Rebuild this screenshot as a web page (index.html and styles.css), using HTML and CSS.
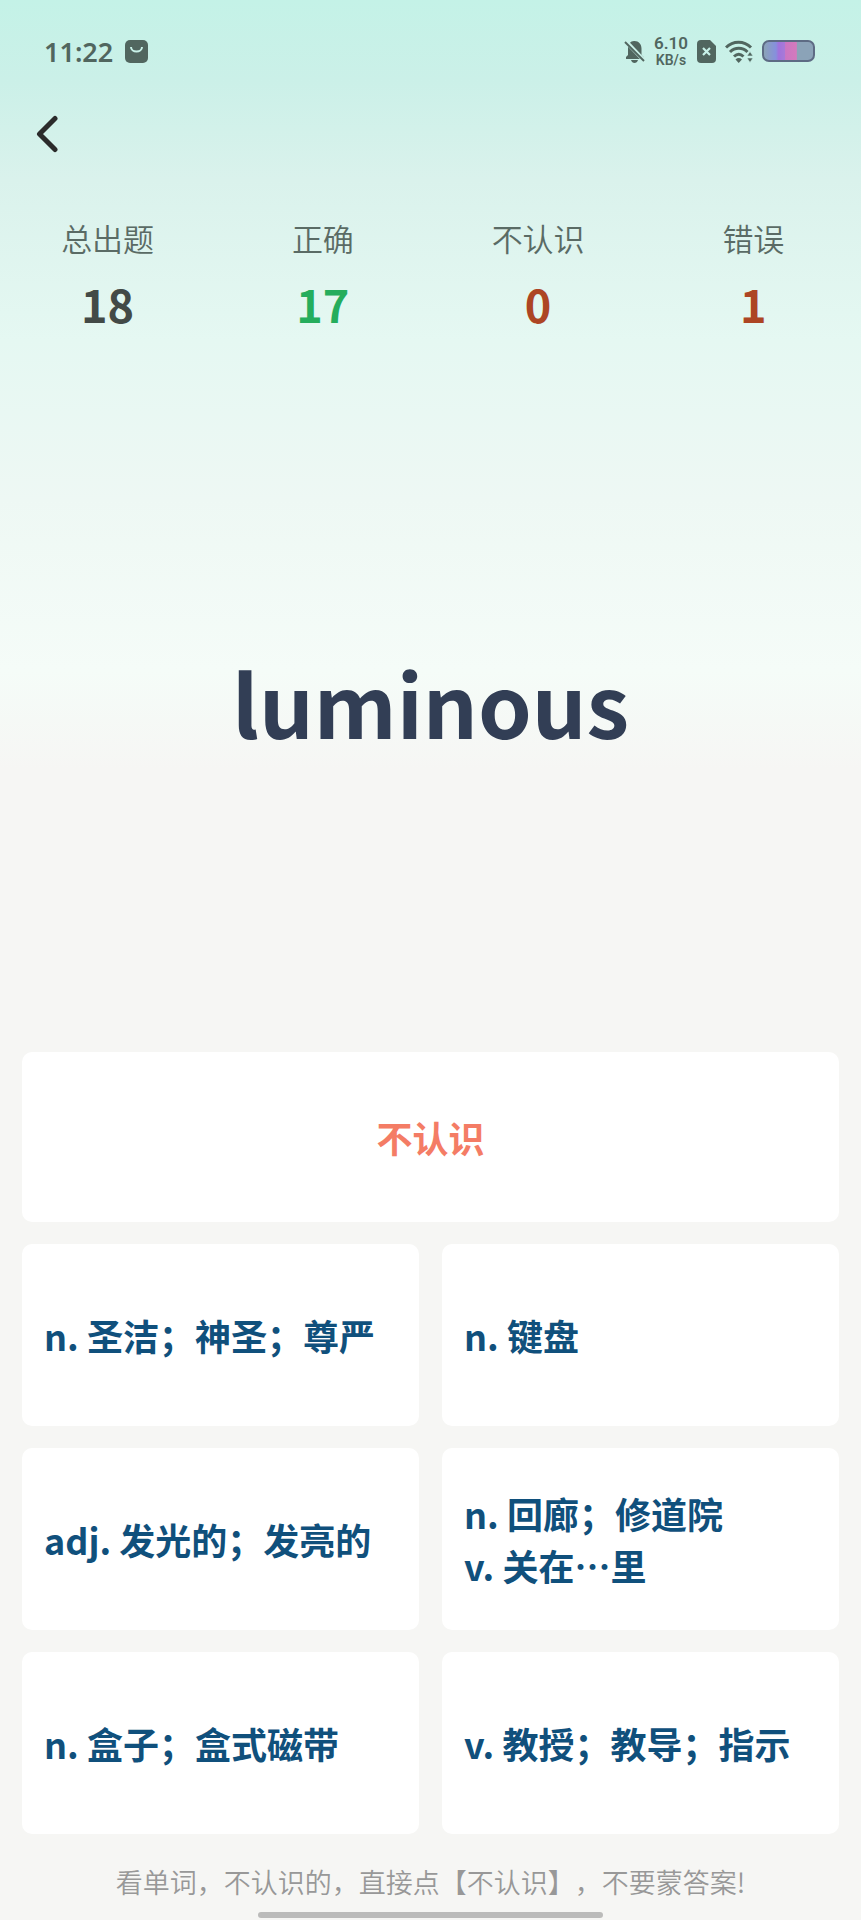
FILE: index.html
```html
<!DOCTYPE html>
<html lang="zh-CN">
  <head>
    <meta charset="UTF-8" />
    <meta name="viewport" content="width=device-width, initial-scale=1.0" />
    <title>看词选义</title>
    <link rel="stylesheet" href="styles.css">
  </head>
  <body>
    <div class="status">
      <span class="time">11:22</span>
      <svg class="bag" width="23" height="23" viewBox="0 0 23 23">
        <rect width="23" height="23" rx="5" fill="#51665f"/>
        <path d="M6 7a5.500 4.500 0 0 0 11 0" fill="none" stroke="#c8f1e8" stroke-width="2"/>
      </svg>
      <div class="status-right">
        <svg width="21" height="24" viewBox="0 0 21 24">
          <path d="M2 20v-2l2-2V9.500C4 5 6.500 2.200 10 2c4.500-.3 7.500 3 7.500 7.500V16l2 2v2zM7 21h7c-.5 2-2 3-3.500 3S7.500 23 7 21z" fill="#51665f"/>
          <path d="M1.500 2l20 21" stroke="#caf1e8" stroke-width="4"/>
          <path d="M1 3l19 19" stroke="#51665f" stroke-width="2"/>
        </svg>
        <div class="speed"><span>6.10</span><span class="unit">KB/s</span></div>
        <svg width="19" height="23" viewBox="0 0 19 23">
          <path d="M4 0h9l6 6v13a4 4 0 0 1-4 4H4a4 4 0 0 1-4-4V4a4 4 0 0 1 4-4z" fill="#51665f"/>
          <path d="M6 8l7 7M13 8l-7 7" stroke="#c8f1e8" stroke-width="2.200"/>
        </svg>
        <svg class="wifi" width="28" height="23" viewBox="0 0 28 23">
          <g fill="none" stroke="#51665f" stroke-width="3">
            <path d="M1 7.500c7-7 18-7 25 0"/>
            <path d="M5 12c5-5 12.500-5 17.500 0"/>
            <path d="M9 16.500c3-2.800 6.500-2.800 9.500 0"/>
          </g>
          <path d="M10.500 19.500a5 5 0 0 1 6.500 0L13.700 23z" fill="#51665f"/>
          <path d="M22 16l3-4.500 3 4.500zM22 18h6l-3 4.500z" fill="#51665f" stroke="#c8f1e8" stroke-width=".6"/>
        </svg>
        <div class="battery"></div>
      </div>
    </div>

    <header class="nav">
      <button class="back" aria-label="返回">
        <svg width="22" height="38" viewBox="0 0 22 38">
          <path d="M19 3.500L3.500 19 19 34.500" fill="none" stroke="#2b2b2b" stroke-width="5" stroke-linecap="round" stroke-linejoin="round"/>
        </svg>
      </button>
    </header>

    <div class="stats">
      <div class="stat"><span class="label">总出题</span><span class="num">18</span></div>
      <div class="stat"><span class="label">正确</span><span class="num ok">17</span></div>
      <div class="stat"><span class="label">不认识</span><span class="num err">0</span></div>
      <div class="stat"><span class="label">错误</span><span class="num err">1</span></div>
    </div>

    <main class="word">
      <h1>luminous</h1>
    </main>

    <div class="options">
      <button class="option unknown">不认识</button>
      <button class="option">n. 圣洁；神圣；尊严</button>
      <button class="option">n. 键盘</button>
      <button class="option">adj. 发光的；发亮的</button>
      <button class="option">n. 回廊；修道院<br>v. 关在…里</button>
      <button class="option">n. 盒子；盒式磁带</button>
      <button class="option">v. 教授；教导；指示</button>
    </div>

    <p class="hint">看单词，不认识的，直接点【不认识】，不要蒙答案!</p>
    <div class="home-bar"></div>
  </body>
</html>
```

FILE: styles.css
```css
* {
  margin: 0;
  padding: 0;
  box-sizing: border-box;
}
body {
  min-height: 100vh;
  display: flex;
  flex-direction: column;
  font-family: 'Noto Sans CJK SC', sans-serif;
  text-spacing-trim: space-all;
  background: #f6f6f4 linear-gradient(#c4f2e7 0, #cbf0e8 80px, #daf2ec 180px, #e5f8f2 340px, #eef8f4 500px, #f5fcf8 670px, #f6f6f4 770px) no-repeat;
}
.status {
  height: 102px;
  padding: 0 46px 0 44px;
  display: flex;
  align-items: center;
  font-family: 'Noto Sans', sans-serif;
  font-weight: 600;
  color: #51665f;
}
.time {
  font-size: 27px;
}
.bag {
  margin-left: 12px;
}
.status-right {
  margin-left: auto;
  display: flex;
  align-items: center;
  gap: 9px;
}
.speed {
  display: flex;
  flex-direction: column;
  align-items: center;
  font-family: Roboto, sans-serif;
  font-size: 17px;
  line-height: 18px;
}
.unit {
  font-size: 14px;
  line-height: 16px;
}
.battery {
  width: 53px;
  height: 22px;
  border: 2px solid #5d6b84;
  border-radius: 7px;
  background: linear-gradient(90deg, #8ba3b8 0, #8690dc 24%, #a172dc 30%, #a77ad8 42%, #cb76c2 44%, #d47abd 66%, #8ba3b8 68%);
}
.nav {
  height: 64px;
  padding-left: 36px;
  display: flex;
  align-items: center;
}
.back {
  display: flex;
  border: none;
  background: none;
  cursor: pointer;
}
.stats {
  padding-top: 49px;
  display: flex;
}
.stat {
  flex: 1;
  display: flex;
  flex-direction: column;
  align-items: center;
}
.label {
  font-size: 31px;
  line-height: 46px;
  font-weight: 350;
  color: #5a6b65;
}
.num {
  margin-top: 12px;
  font-size: 45px;
  line-height: 62px;
  font-weight: 700;
  color: #434a47;
}
.ok {
  color: #25ad5c;
}
.err {
  color: #ad4524;
}
.word {
  flex: 1;
  padding-top: 16px;
  display: flex;
  align-items: center;
  justify-content: center;
}
.word h1 {
  font-size: 86px;
  line-height: 140px;
  font-weight: 700;
  color: #323e55;
}
.options {
  padding: 0 22px;
  display: grid;
  grid-template-columns: 1fr 1fr;
  gap: 22px 23px;
}
.option {
  min-height: 182px;
  padding: 0 22px;
  border: none;
  border-radius: 10px;
  background: #fff;
  font-family: inherit;
  font-size: 36px;
  line-height: 52px;
  font-weight: 700;
  text-align: left;
  color: #10507c;
  cursor: pointer;
}
.unknown {
  grid-column: 1 / -1;
  min-height: 170px;
  text-align: center;
  color: #f47c65;
}
.hint {
  padding-top: 28px;
  font-size: 27px;
  line-height: 40px;
  font-weight: 350;
  text-align: center;
  color: #989898;
}
.home-bar {
  width: 40%;
  height: 6px;
  margin: 10px auto 2px;
  border-radius: 3px;
  background: #bbbbba;
}
```
